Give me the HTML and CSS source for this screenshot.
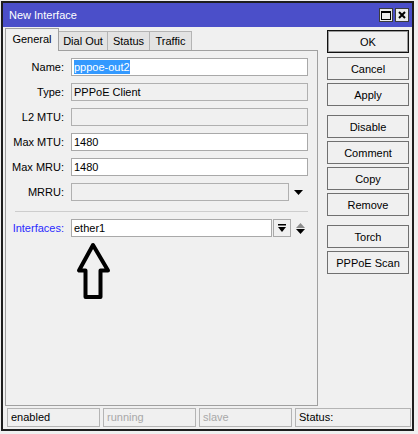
FILE: index.html
```html
<!DOCTYPE html>
<html>
<head>
<meta charset="utf-8">
<title>New Interface</title>
<link rel="stylesheet" href="styles.css">
</head>
<body>
<div class="window">
  <div class="titlebar">
    <span class="title">New Interface</span>
    <div class="tb-buttons">
      <span class="tb-btn">
        <svg width="10" height="9" viewBox="0 0 10 9"><rect x="0.5" y="0.5" width="9" height="8" fill="none" stroke="#000"/><rect x="0" y="0" width="10" height="2" fill="#000"/></svg>
      </span>
      <span class="tb-btn">
        <svg width="8" height="8" viewBox="0 0 8 8"><path d="M1 1 L7 7 M7 1 L1 7" stroke="#000" stroke-width="2"/></svg>
      </span>
    </div>
  </div>

  <div class="main">
    <div class="left">
      <div class="tabs">
        <div class="tab tab-general active">General</div>
        <div class="tab tab-dialout">Dial Out</div>
        <div class="tab tab-status">Status</div>
        <div class="tab tab-traffic">Traffic</div>
      </div>
      <div class="panel">
        <div class="form">
          <div class="label">Name:</div>
          <div class="field"><span class="selected">pppoe-out2</span></div>

          <div class="label">Type:</div>
          <div class="field disabled">PPPoE Client</div>

          <div class="label">L2 MTU:</div>
          <div class="field disabled"></div>

          <div class="label">Max MTU:</div>
          <div class="field">1480</div>

          <div class="label">Max MRU:</div>
          <div class="field">1480</div>

          <div class="label">MRRU:</div>
          <div class="field-row">
            <div class="field disabled field-mrru"></div>
            <svg class="drop-arrow" width="9" height="5" viewBox="0 0 9 5"><path d="M0 0 H9 L4.5 5 Z" fill="#000"/></svg>
          </div>
        </div>

        <div class="separator"></div>

        <div class="form">
          <div class="label label-link">Interfaces:</div>
          <div class="field-row">
            <div class="field field-iface">ether1</div>
            <div class="combo-btn">
              <svg width="8" height="8" viewBox="0 0 8 8"><rect x="0" y="0" width="8" height="1.5" fill="#000"/><path d="M0 3 H8 L4 8 Z" fill="#000"/></svg>
            </div>
            <svg class="updown" width="9" height="11" viewBox="0 0 9 11"><path d="M4.5 0 L9 5 H0 Z" fill="#8c8c8c"/><path d="M0 6 H9 L4.5 11 Z" fill="#000"/></svg>
          </div>
        </div>

        <svg class="pointer" width="40" height="62" viewBox="74 240 40 62">
          <path d="M93 245 L79 270.5 L85.5 270.5 L85.5 297 L100.5 297 L100.5 270.5 L108 270.5 Z" fill="none" stroke="#000" stroke-width="4" stroke-linejoin="round"/>
        </svg>
      </div>
    </div>

    <div class="buttons">
      <div class="btn btn-default">OK</div>
      <div class="btn">Cancel</div>
      <div class="btn group-end">Apply</div>
      <div class="btn">Disable</div>
      <div class="btn">Comment</div>
      <div class="btn">Copy</div>
      <div class="btn group-end">Remove</div>
      <div class="btn">Torch</div>
      <div class="btn">PPPoE Scan</div>
    </div>
  </div>

  <div class="statusbar">
    <div class="sb-cell">enabled</div>
    <div class="sb-cell dim">running</div>
    <div class="sb-cell dim">slave</div>
    <div class="sb-cell">Status:</div>
  </div>
</div>
</body>
</html>
```

FILE: styles.css
```css
* {
  box-sizing: border-box;
}

html,
body {
  margin: 0;
  padding: 0;
}

body {
  background: #f0f0f0;
  font-family: "Liberation Sans", Arial, sans-serif;
  font-size: 11px;
  color: #000;
}

/* window frame */
.window {
  margin: 1px 0 0 1px;
  width: 413px;
  height: 430px;
  border: 2px solid #1e1e1e;
  background: #f0f0f0;
  display: flex;
  flex-direction: column;
}

.titlebar {
  height: 24px;
  flex: none;
  background: #4b4fc9;
  color: #fff;
  display: flex;
  align-items: center;
  justify-content: space-between;
  padding: 0 3px 0 6px;
}

.title {
  font-size: 11px;
}

.tb-buttons {
  display: flex;
  gap: 2px;
}

.tb-btn {
  width: 14px;
  height: 14px;
  background: #ececec;
  border: 1px solid #3c3c3c;
  display: flex;
  align-items: center;
  justify-content: center;
}

/* body of the dialog */
.main {
  height: 380px;
  flex: none;
  display: flex;
  padding: 1px 3px 0 2px;
  gap: 9px;
}

.left {
  width: 313px;
  display: flex;
  flex-direction: column;
}

.tabs {
  height: 22px;
  display: flex;
  align-items: flex-end;
}

.tab {
  height: 19px;
  border: 1px solid #b4b4b4;
  border-bottom: none;
  background: #e3e3e3;
  display: flex;
  align-items: center;
  justify-content: center;
  margin-right: -1px;
}

.tab.active {
  height: 23px;
  margin-bottom: -1px;
  background: #f0f0f0;
  border-color: #a0a0a0;
  position: relative;
  z-index: 1;
  padding-bottom: 2px;
}

.tab-general { width: 54px; }
.tab-dialout { width: 50px; }
.tab-status { width: 43px; }
.tab-traffic { width: 43px; }

.panel {
  height: 356px;
  border: 1px solid #a0a0a0;
  position: relative;
  padding-top: 7px;
}

.form {
  display: grid;
  grid-template-columns: 58px 237px;
  column-gap: 7px;
  grid-auto-rows: 18px;
  row-gap: 7px;
}

.label {
  text-align: right;
  line-height: 18px;
  white-space: nowrap;
}

.label-link {
  color: #2a2aff;
}

.field {
  height: 18px;
  border: 1px solid #a9a9a9;
  background: #fff;
  padding: 0 2px;
  line-height: 16px;
  white-space: nowrap;
  overflow: hidden;
}

.field.disabled {
  background: #f0f0f0;
  border-color: #b0b0b0;
}

.selected {
  background: #3399ff;
  color: #fff;
  display: inline-block;
  line-height: 14px;
}

.field-row {
  display: flex;
  align-items: center;
}

.field-mrru {
  width: 218px;
}

.drop-arrow {
  margin-left: 5px;
}

.field-iface {
  width: 201px;
}

.combo-btn {
  width: 18px;
  height: 18px;
  border: 1px solid #a9a9a9;
  background: #f0f0f0;
  margin-left: 1px;
  display: flex;
  align-items: center;
  justify-content: center;
}

.updown {
  margin-left: 5px;
}

.separator {
  margin: 10px 0 7px 9px;
  width: 293px;
  border-top: 1px solid #cdcdcd;
}

/* annotation arrow drawn over the panel */
.pointer {
  position: absolute;
  left: 68px;
  top: 189px;
}

/* right-hand command buttons */
.buttons {
  width: 82px;
  padding-top: 2px;
  display: flex;
  flex-direction: column;
  gap: 3px;
}

.btn {
  height: 23px;
  border: 1px solid #707070;
  background: #f0f0f0;
  display: flex;
  align-items: center;
  justify-content: center;
}

.btn-default {
  border-color: #111;
  box-shadow: inset 0 0 0 1px #9a9a9a;
  margin-bottom: 1px;
}

.btn.group-end {
  margin-bottom: 6px;
}

/* status bar */
.statusbar {
  height: 19px;
  flex: none;
  margin: 1px 0 2px;
  padding: 0 1px 0 4px;
  display: grid;
  grid-template-columns: 93px 93px 93px 1fr;
  column-gap: 3px;
}

.sb-cell {
  border: 1px solid #b4b4b4;
  padding-left: 3px;
  line-height: 17px;
  white-space: nowrap;
  overflow: hidden;
}

.sb-cell.dim {
  color: #a8a8a8;
}
```
